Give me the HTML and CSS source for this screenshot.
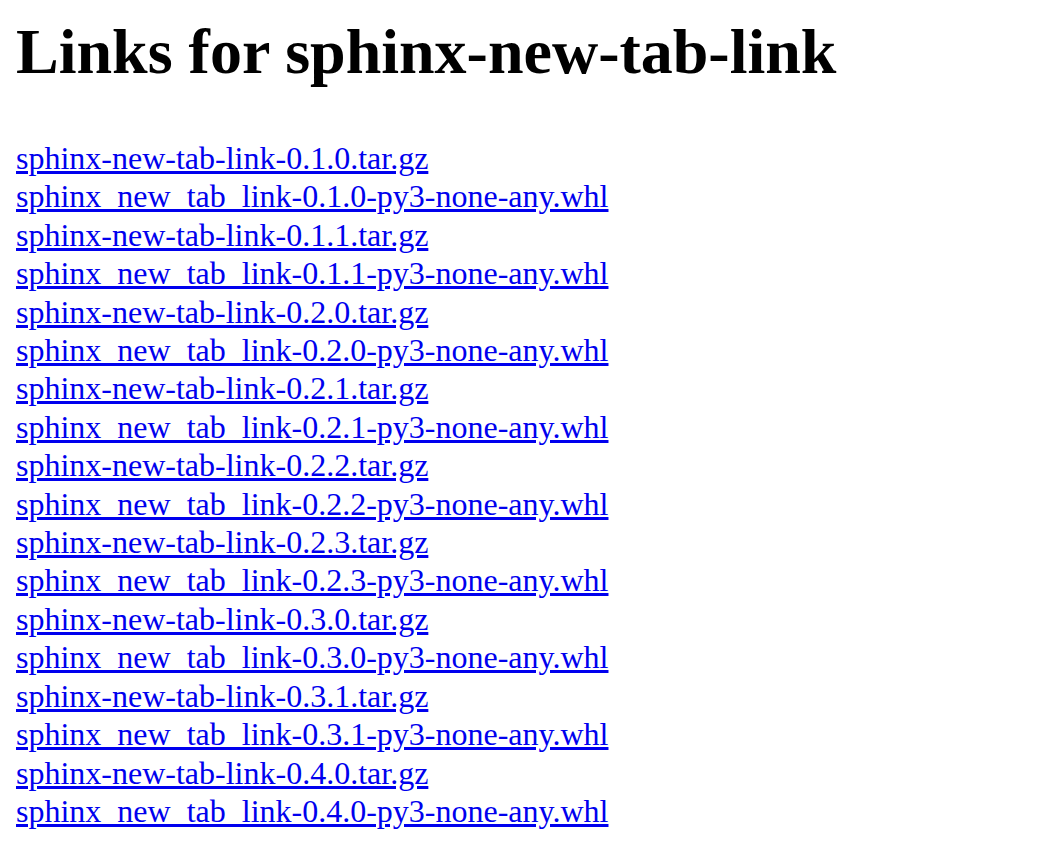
FILE: index.html
```html
<!DOCTYPE html>
<html>
<head>
<meta charset="utf-8">
<title>Links for sphinx-new-tab-link</title>
<link rel="stylesheet" href="styles.css">
</head>
<body class="page">
<h1 class="title">Links for sphinx-new-tab-link</h1>
<div class="links">
<a class="file" href="#">sphinx-new-tab-link-0.1.0.tar.gz</a><br>
<a class="file" href="#">sphinx_new_tab_link-0.1.0-py3-none-any.whl</a><br>
<a class="file" href="#">sphinx-new-tab-link-0.1.1.tar.gz</a><br>
<a class="file" href="#">sphinx_new_tab_link-0.1.1-py3-none-any.whl</a><br>
<a class="file" href="#">sphinx-new-tab-link-0.2.0.tar.gz</a><br>
<a class="file" href="#">sphinx_new_tab_link-0.2.0-py3-none-any.whl</a><br>
<a class="file" href="#">sphinx-new-tab-link-0.2.1.tar.gz</a><br>
<a class="file" href="#">sphinx_new_tab_link-0.2.1-py3-none-any.whl</a><br>
<a class="file" href="#">sphinx-new-tab-link-0.2.2.tar.gz</a><br>
<a class="file" href="#">sphinx_new_tab_link-0.2.2-py3-none-any.whl</a><br>
<a class="file" href="#">sphinx-new-tab-link-0.2.3.tar.gz</a><br>
<a class="file" href="#">sphinx_new_tab_link-0.2.3-py3-none-any.whl</a><br>
<a class="file" href="#">sphinx-new-tab-link-0.3.0.tar.gz</a><br>
<a class="file" href="#">sphinx_new_tab_link-0.3.0-py3-none-any.whl</a><br>
<a class="file" href="#">sphinx-new-tab-link-0.3.1.tar.gz</a><br>
<a class="file" href="#">sphinx_new_tab_link-0.3.1-py3-none-any.whl</a><br>
<a class="file" href="#">sphinx-new-tab-link-0.4.0.tar.gz</a><br>
<a class="file" href="#">sphinx_new_tab_link-0.4.0-py3-none-any.whl</a><br>
</div>
</body>
</html>
```

FILE: styles.css
```css
html, body {
  background: #ffffff;
}
.page {
  margin: 16px;
  font-family: "Liberation Serif", "Times New Roman", serif;
  font-size: 32px;
  color: #000000;
}
.title {
  font-size: 64px;
  font-weight: bold;
  line-height: 72px;
  margin: 0 0 51px 0;
}
.links {
  line-height: 38.4px;
}
.file {
  color: #0000ee;
  text-decoration: underline;
}
```
